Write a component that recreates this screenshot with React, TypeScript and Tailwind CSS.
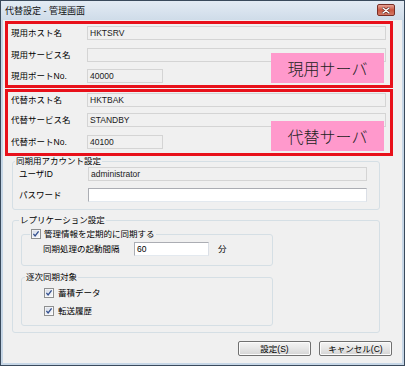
import React from "react";

const FONT = "font-['Liberation_Sans','Noto_Sans_CJK_JP',sans-serif]";

function Check() {
  return (
    <svg width="10" height="10" viewBox="0 0 10 10" className="shrink-0">
      <defs>
        <linearGradient id="cbg" x1="0" y1="0" x2="1" y2="1">
          <stop offset="0" stopColor="#d6dbe6" />
          <stop offset="1" stopColor="#f7f8fa" />
        </linearGradient>
      </defs>
      <rect x="0.5" y="0.5" width="9" height="9" fill="#ffffff" stroke="#8e8f8f" />
      <rect x="1.5" y="1.5" width="7" height="7" fill="url(#cbg)" />
      <path d="M2.4 4.9 L4.1 6.9 L7.6 2.4" stroke="#324f8f" strokeWidth="1.3" fill="none" />
    </svg>
  );
}

function ROField({ w, value }: { w: string; value?: string }) {
  return (
    <div className={`${w} h-[14px] border border-[#d4d4d4] bg-[#f0f0f0] pl-[2px] flex items-center text-[8.5px] text-[#1a1a1a]`}>
      {value}
    </div>
  );
}

function RedBox({ prefix, host, service, port, tag, pt, g1, g2 }: { prefix: string; host: string; service: string; port: string; tag: string; pt: string; g1: string; g2: string }) {
  return (
    <div className={`relative z-10 ml-[2px] w-[388px] h-[67px] border-[3px] border-[#e8101a] pl-[3px] pr-[3px] ${pt} flex flex-col`}>
      <div className="flex items-center">
        <div className="w-[76px]">{prefix}ホスト名</div>
        <ROField w="w-[299px]" value={host} />
      </div>
      <div className={`flex items-center ${g1}`}>
        <div className="w-[76px]">{prefix}サービス名</div>
        <ROField w="w-[299px]" value={service} />
      </div>
      <div className={`flex items-center ${g2}`}>
        <div className="w-[76px]">{prefix}ポートNo.</div>
        <ROField w="w-[76px]" value={port} />
      </div>
      <div className="absolute left-[263px] top-[29px] w-[113px] h-[30px] bg-[#ff99cc] flex items-center justify-center text-[16px] leading-[18px] text-[#222] font-['Noto_Sans_CJK_JP',sans-serif] font-light">
        {tag}
      </div>
    </div>
  );
}

function Button({ label }: { label: string }) {
  return (
    <div className="w-[73px] h-[15px] rounded-[2px] border border-[#707070] bg-linear-to-b from-[#f4f4f4] via-[#e6e6e6] to-[#d4d4d4] flex items-center justify-center text-[8.5px] text-black shadow-[inset_0_0_0_1px_#fbfbfb]">
      {label}
    </div>
  );
}

export default function App() {
  return (
    <div className={`w-[405px] h-[366px] flex flex-col bg-[#c6d6e6] border border-[#3a4a5c] ${FONT} text-[8.5px] leading-[10px] text-black overflow-hidden`}>
      <div className="h-[19px] flex items-start justify-between pl-[4px] pr-[9px] bg-linear-to-b from-[#e3ebf4] to-[#cfdce9]">
        <span className="text-[9px] leading-[10px] mt-[5px] text-[#111]">代替設定 - 管理画面</span>
        <div className="mt-[3px] w-[18px] h-[12px] rounded-[2px] border border-[#7a2f26] bg-linear-to-b from-[#e7a396] via-[#c9553f] to-[#d47a66] flex items-center justify-center">
          <svg width="8" height="7" viewBox="0 0 8 7">
            <path d="M1 1 L7 6 M7 1 L1 6" stroke="#5a1e18" strokeWidth="2.6" strokeLinecap="round" />
            <path d="M1 1 L7 6 M7 1 L1 6" stroke="#ffffff" strokeWidth="1.5" strokeLinecap="round" />
          </svg>
        </div>
      </div>
      <div className="flex-1 mx-[2px] mb-[2px] bg-[#f0f0f0] flex flex-col">
        <div className="mt-[1px]">
          <RedBox prefix="現用" host="HKTSRV" service="" port="40000" tag="現用サーバ" pt="pt-[2px]" g1="mt-[8px]" g2="mt-[7px]" />
        </div>
        <div className="mt-[1px]">
          <RedBox prefix="代替" host="HKTBAK" service="STANDBY" port="40100" tag="代替サーバ" pt="pt-[1px]" g1="mt-[6px]" g2="mt-[8px]" />
        </div>

        <fieldset className="ml-[9px] w-[368px] border border-[#d5dfe5] rounded-[3px] pl-[6px] pr-[12px] pt-[1px] pb-[7px]">
          <legend className="-ml-[4px] px-[1px] leading-[10px]">同期用アカウント設定</legend>
          <div className="flex items-center">
            <div className="w-[69px]">ユーザID</div>
            <ROField w="w-[279px]" value="administrator" />
          </div>
          <div className="flex items-center mt-[7px]">
            <div className="w-[69px]">パスワード</div>
            <div className="w-[279px] h-[14px] border border-[#abadb3] border-b-[#e3e9ef] border-r-[#dbdfe6] bg-white" />
          </div>
        </fieldset>

        <fieldset className="mt-[5px] ml-[9px] w-[368px] border border-[#d5dfe5] rounded-[3px] pl-[8px] pt-[4px] pb-[6px]">
          <legend className="ml-[-2px] px-[1px] leading-[10px]">レプリケーション設定</legend>
          <fieldset className="w-[252px] border border-[#d5dfe5] rounded-[3px] pl-[21px] pt-[3px] pb-[9px]">
            <legend className="-ml-[13px] px-[1px] flex items-center gap-[3px] leading-[10px]">
              <Check />
              <span>管理情報を定期的に同期する</span>
            </legend>
            <div className="flex items-center">
              <div className="w-[91px]">同期処理の起動間隔</div>
              <div className="w-[75px] h-[14px] border border-[#abadb3] border-b-[#e3e9ef] border-r-[#dbdfe6] bg-white pl-[2px] flex items-center text-[8.5px]">60</div>
              <div className="ml-[9px]">分</div>
            </div>
          </fieldset>
          <fieldset className="mt-[6px] w-[252px] border border-[#d5dfe5] rounded-[3px] pl-[22px] pt-[5px] pb-[8px]">
            <legend className="-ml-[19px] px-[1px] leading-[10px]">逐次同期対象</legend>
            <div className="flex items-center gap-[4px] h-[12px]">
              <Check />
              <span>蓄積データ</span>
            </div>
            <div className="flex items-center gap-[4px] h-[12px] mt-[6px]">
              <Check />
              <span>転送履歴</span>
            </div>
          </fieldset>
        </fieldset>

        <div className="mt-[8px] flex justify-end gap-[8px] pr-[10px]">
          <Button label="設定(S)" />
          <Button label="キャンセル(C)" />
        </div>
      </div>
    </div>
  );
}
